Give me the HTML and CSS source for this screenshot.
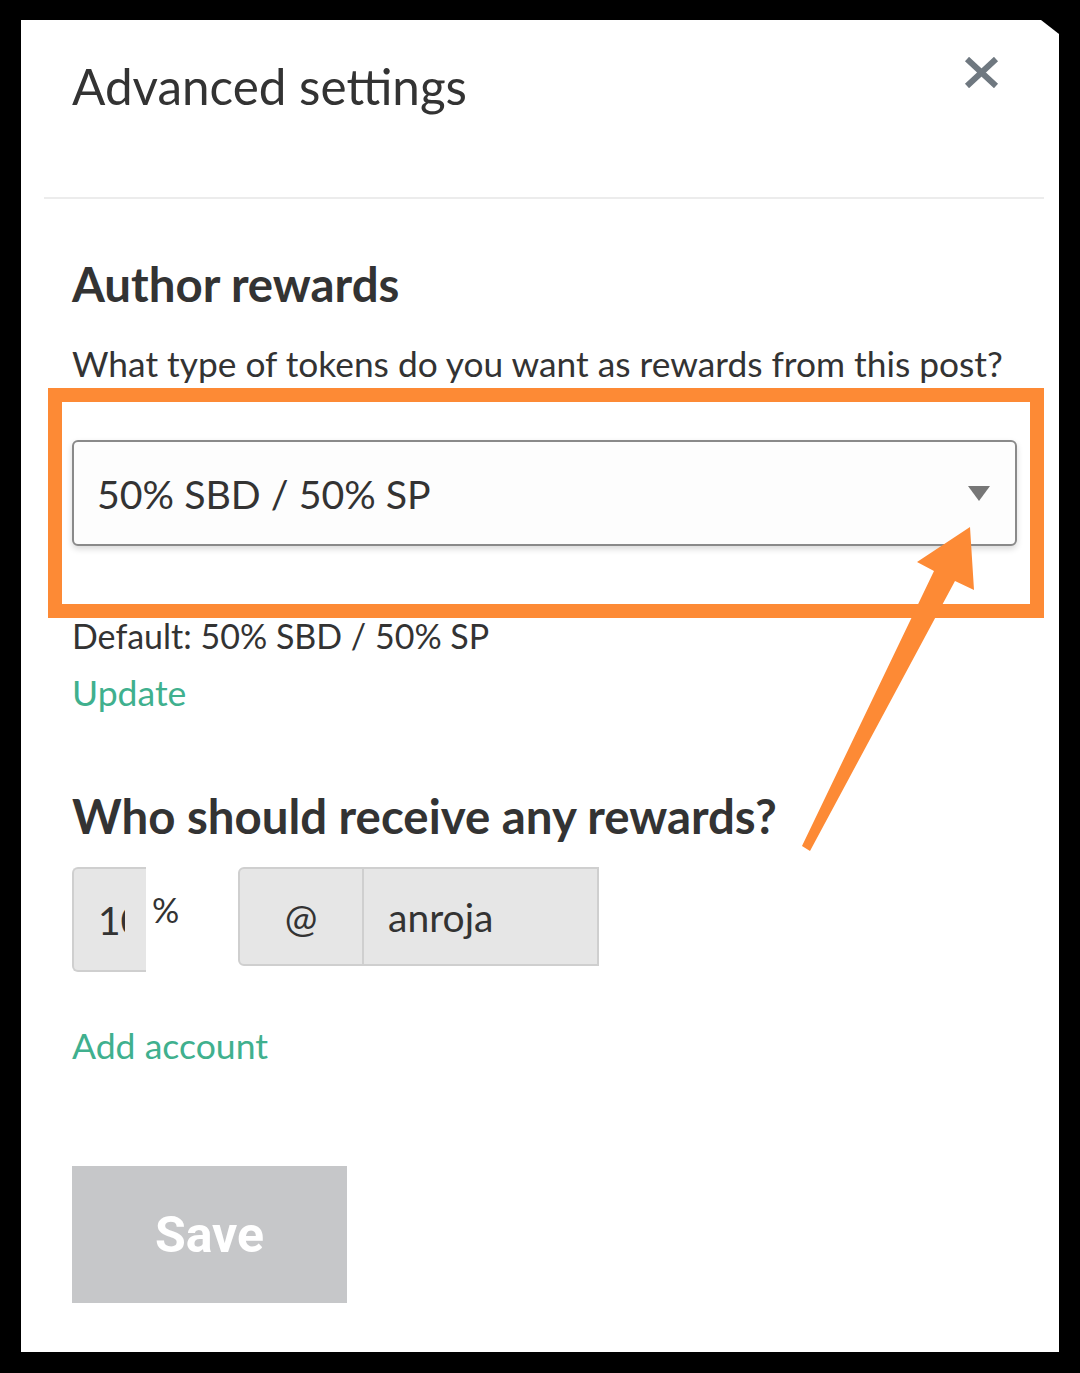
FILE: index.html
```html
<!DOCTYPE html>
<html lang="en">
<head>
    <meta charset="UTF-8">
    <meta name="viewport" content="width=device-width, initial-scale=1.0">
    <title>Advanced settings</title>
    <link rel="stylesheet" href="styles.css">
</head>
<body>
    <div class="page">
        <div class="modal">
            <div class="modal-header">
                <h1>Advanced settings</h1>
                <button class="close-btn" aria-label="Close">
                    <svg width="35" height="31" viewBox="0 0 35 31">
                        <path d="M3 2 L32 29 M32 2 L3 29" stroke="#6f7880" stroke-width="6" fill="none"/>
                    </svg>
                </button>
            </div>

            <div class="modal-body">
                <h2 class="first">Author rewards</h2>
                <p class="question">What type of tokens do you want as rewards from this post?</p>

                <div class="select-box">
                    <span>50% SBD / 50% SP</span>
                    <span class="caret"></span>
                </div>

                <p class="default">Default: 50% SBD / 50% SP</p>
                <a class="link update" href="#">Update</a>

                <h2 class="second">Who should receive any rewards?</h2>

                <div class="beneficiary">
                    <div class="percent-input"><span class="value">10</span></div>
                    <span class="percent">%</span>
                    <div class="account-input">
                        <div class="at">@</div>
                        <div class="name">anroja</div>
                    </div>
                </div>

                <a class="link add-account" href="#">Add account</a>

                <button class="save-btn">Save</button>
            </div>
        </div>
    </div>

    <!-- orange annotation drawn over the screenshot -->
    <div class="highlight"></div>
    <svg class="arrow" width="1080" height="1373" viewBox="0 0 1080 1373">
        <polygon points="970,527 974,590 955,581 810,851 802,846 934,571 917,562" fill="#fd8a35"/>
    </svg>
</body>
</html>
```

FILE: styles.css
```css
body {
    margin: 0;
    background: #000;
    font-family: 'Lato', 'Open Sans', sans-serif;
    color: #333;
    height: 1373px;
    overflow: hidden;
    position: relative;
}

.page {
    padding: 20px 21px 0 21px;
}

.modal {
    width: 1038px;
    height: 1332px;
    background: #fff;
    box-shadow: 0 2px 0 #333;
    clip-path: polygon(0 0, calc(100% - 18px) 0, 100% 14px, 100% 100%, 0 100%);
}

.modal-header {
    margin: 0 15px 0 23px;
    height: 177px;
    border-bottom: 2px solid #ececec;
    display: flex;
    justify-content: space-between;
    align-items: flex-start;
    padding: 0 45px 0 28px;
}

.modal-header h1 {
    margin: 38px 0 0;
    font-size: 49.4px;
    line-height: 56px;
    font-weight: 400;
    color: #333;
}

.close-btn {
    margin-top: 37px;
    padding: 0;
    border: none;
    background: none;
    cursor: pointer;
    line-height: 0;
}

.modal-body {
    padding-left: 51px;
    display: flex;
    flex-direction: column;
    align-items: flex-start;
}

.modal-body h2 {
    font-size: 47.4px;
    line-height: 56px;
    font-weight: 700;
    margin: 0;
    color: #333;
}

.modal-body h2.first {
    margin-top: 57px;
}

.modal-body h2.second {
    margin-top: 74px;
}

.question {
    font-size: 35.3px;
    line-height: 42px;
    margin: 31px 0 0;
    color: #333;
}

.select-box {
    margin-top: 55px;
    width: 945px;
    height: 106px;
    box-sizing: border-box;
    border: 2px solid #8a8a8a;
    border-radius: 6px;
    background: #fdfdfd;
    box-shadow: 0 3px 6px rgba(0, 0, 0, 0.15);
    display: flex;
    align-items: center;
    justify-content: space-between;
    padding: 0 25px 0 23px;
    font-size: 39.3px;
    color: #333;
}

.caret {
    width: 0;
    height: 0;
    border-left: 11px solid transparent;
    border-right: 11px solid transparent;
    border-top: 15px solid #777;
}

.default {
    font-size: 34px;
    line-height: 40px;
    margin: 70px 0 0;
    color: #333;
}

.link {
    font-size: 35.6px;
    line-height: 42px;
    color: #40b08e;
    text-decoration: none;
}

.update {
    margin-top: 16px;
}

.beneficiary {
    margin-top: 23px;
    display: flex;
    align-items: flex-start;
}

.percent-input {
    width: 74px;
    height: 105px;
    box-sizing: border-box;
    background: #e6e6e6;
    border: 2px solid #cfcfcf;
    border-right: none;
    border-radius: 6px 0 0 6px;
    display: flex;
    align-items: center;
    padding-left: 24px;
    font-size: 39px;
    white-space: nowrap;
}

.percent-input .value {
    width: 27px;
    overflow: hidden;
}

.percent {
    font-size: 34px;
    line-height: 34px;
    margin: 26px 0 0 6px;
    width: 86px;
}

.account-input {
    width: 361px;
    height: 99px;
    box-sizing: border-box;
    background: #e6e6e6;
    border: 2px solid #cfcfcf;
    border-radius: 6px 0 0 6px;
    display: flex;
    font-size: 39px;
}

.account-input .at {
    width: 122px;
    border-right: 2px solid #cfcfcf;
    display: flex;
    align-items: center;
    justify-content: center;
}

.account-input .name {
    display: flex;
    align-items: center;
    padding-left: 24px;
}

.add-account {
    margin-top: 53px;
}

.save-btn {
    margin-top: 99px;
    width: 275px;
    height: 137px;
    border: none;
    background: #c6c7c9;
    color: #fff;
    font-family: 'Roboto', sans-serif;
    font-weight: 700;
    font-size: 50px;
}

.highlight {
    position: absolute;
    left: 48px;
    top: 388px;
    width: 996px;
    height: 230px;
    box-sizing: border-box;
    border: 14px solid #fd8a35;
}

.arrow {
    position: absolute;
    left: 0;
    top: 0;
}
```
